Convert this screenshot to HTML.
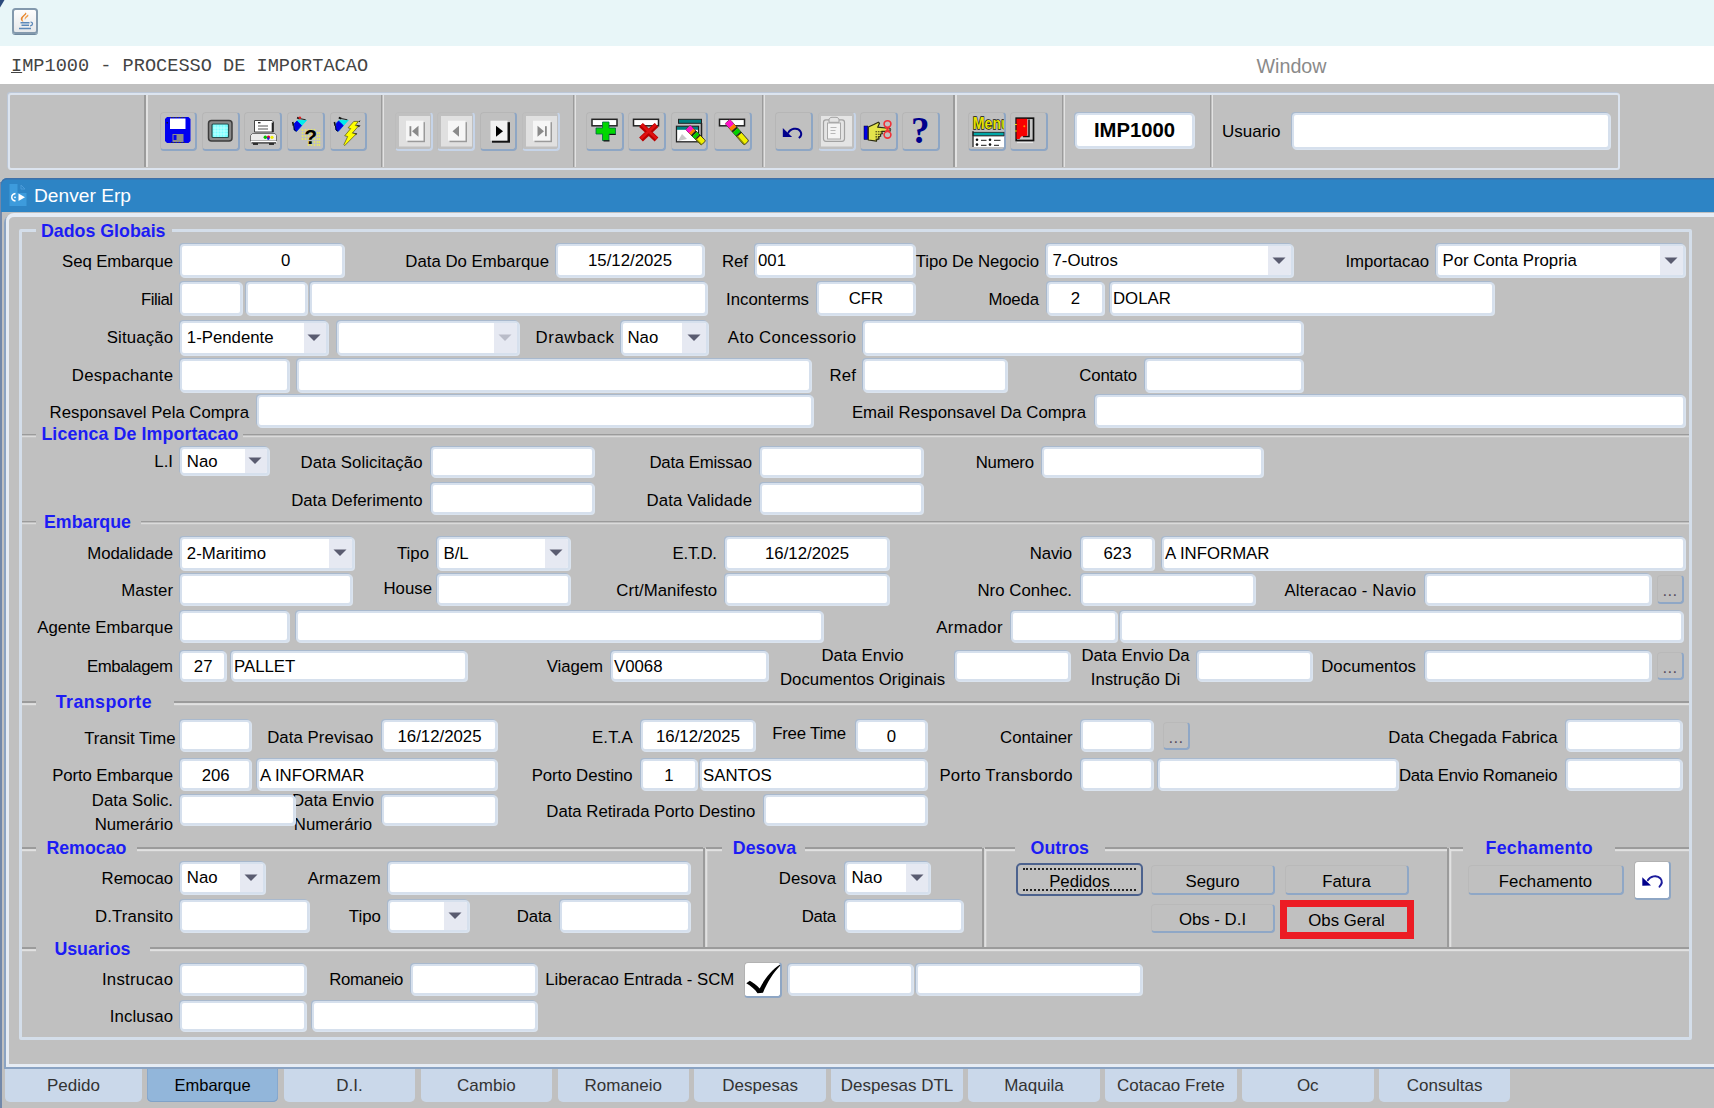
<!DOCTYPE html>
<html lang="pt-BR">
<head>
<meta charset="utf-8">
<title>IMP1000 - PROCESSO DE IMPORTACAO</title>
<style>
*{box-sizing:content-box;margin:0;padding:0}
html,body{width:1714px;height:1108px;overflow:hidden;background:#c0c0c0}
body{position:relative;font-family:"Liberation Sans",sans-serif;font-size:16.8px;color:#000}
#top{position:absolute;left:0;top:0;width:1714px;height:46px;background:#e8f6f8}
#menu{position:absolute;left:0;top:46px;width:1714px;height:38px;background:#fff}
#menu .m1{position:absolute;left:11px;top:10px;font-family:"Liberation Mono",monospace;font-size:18.6px;color:#444;letter-spacing:0px}
#menu .m2{position:absolute;left:1256.500px;top:8.500px;font-size:19.700px;color:#8a8a8a}
#tb{position:absolute;left:8px;top:93px;width:1608px;height:73px;border:2px solid #dce4ef;border-radius:3px;box-shadow:-1px -1px 0 0 #bcc7d7}
.sep{position:absolute;top:95px;height:72px;width:1.500px;background:#9b9b9b;box-shadow:2px 0 0 0 #e2e2e2}
.tbb{position:absolute;top:111.700px;width:34.500px;height:36px;border-radius:4px;border:solid;border-width:1px 2px 2px 1px;border-color:#b6b6b6 #8ea6c4 #8ea6c4 #b6b6b6}
.tbb.dis{border-color:#bcbcbc #c6d4e8 #c6d4e8 #bcbcbc}
#jv{position:absolute;left:12px;top:7.500px;width:22px;height:22px;border:2px solid #8399ad;border-radius:3.500px;background:linear-gradient(#fdfdfd,#e6e8ea);box-shadow:0 1px 0 0 #6f889e}
#jv svg{position:absolute;left:0;top:0}
#ttl{position:absolute;left:1px;top:178px;width:1713px;height:34.300px;background:#2d84c5;border-top-left-radius:6px;box-shadow:inset 0 1.500px 0 0 #3f70a8}
#ttl span{position:absolute;left:33px;top:7.300px;font-size:19.2px;color:#fff}
#wl{position:absolute;left:0;top:182px;width:1.8px;height:926px;background:#7288aa}
#wl2{display:none}
#canvas{position:absolute;left:6px;top:212.700px;width:1720px;height:847px;border:3px solid #e6ecf4;border-top-width:4.300px;border-top-left-radius:8px;box-shadow:-2px 2px 0 0 #8aa3c3}
#frame{position:absolute;left:19.300px;top:229.300px;width:1666.500px;height:804.500px;border:3px solid #d4deea;border-radius:2px}
.l{position:absolute;white-space:nowrap;line-height:19px;color:#000}
.t{position:absolute;white-space:nowrap;line-height:20px;font-weight:bold;font-size:17.8px;color:#1c1cf4}
.f{position:absolute;background:#fff;border:2px solid #d6e0ed;border-radius:4px;box-shadow:-1px -1px 0 0 #a9b9cd,1px 1px 0 0 #dbe4ef;white-space:nowrap;overflow:hidden}
.f.c .ct{position:absolute;left:4.500px;top:0}
.f.c .ca{position:absolute;right:0;top:0;background:#e6e9f2}
.hl{position:absolute;height:1.800px;margin-top:-0.500px;background:#9b9b9b;box-shadow:0 2.200px 0 0 #e1e1e1}
.vl{position:absolute;width:1.800px;margin-left:-0.200px;background:#9b9b9b;box-shadow:2.300px 0 0 0 #e1e1e1}
.b{position:absolute;text-align:center;border:solid;border-width:1px 2px 2px 1px;border-color:#b9b9b9 #8fa7c6 #8fa7c6 #b9b9b9;border-radius:4px;background:#c0c0c0;white-space:nowrap}
.b.sm{color:#585060;letter-spacing:0.300px}
.b.flat{border-color:transparent}
.b.foc{border:2px solid #4c628e;border-radius:5px;width:123px !important;height:29px !important;line-height:33px !important}
.b.foc:before{content:"";position:absolute;left:5px;right:5px;top:2.500px;bottom:3px;border-top:2px dotted #222;border-bottom:2px dotted #222}
.wb{position:absolute;background:#fff;border-radius:4px;border:solid;border-width:1px 2px 2px 1px;border-color:#b2b2b2 #8ea6c4 #8ea6c4 #b2b2b2}
.tab{position:absolute;top:1068.500px;height:33px;line-height:33px;text-align:center;background:#cad8ea;border-radius:0 0 5px 5px;color:#333;font-size:17px}
.tab.sel{background:#92b6da;color:#000;font-size:16.500px;box-shadow:inset 0 -1px 0 0 #7fa1c8,inset 1px 0 0 0 #86a8ce,inset -1px 0 0 0 #86a8ce}
</style>
</head>
<body>
<div id="top"><svg width="6" height="9" style="position:absolute;left:0;top:0"><path d="M0 0h4.500L0 7.500z" fill="#2b4a7c"/></svg></div>
<div id="menu"><span class="m1"><u>I</u>MP1000 - PROCESSO DE IMPORTACAO</span><span class="m2">Window</span></div>
<div id="tb"></div>
<div class="sep" style="left:144.3px"></div>
<div class="sep" style="left:380.5px"></div>
<div class="sep" style="left:572.8px"></div>
<div class="sep" style="left:761.8px"></div>
<div class="sep" style="left:953.4px"></div>
<div class="sep" style="left:1061.8px"></div>
<div class="sep" style="left:1209.8px"></div>
<div class="tbb" style="left:159.5px"></div>
<div class="tbb" style="left:202px"></div>
<div class="tbb" style="left:244px"></div>
<div class="tbb" style="left:287px"></div>
<div class="tbb" style="left:329.5px"></div>
<div class="tbb dis" style="left:395.3px"></div>
<div class="tbb dis" style="left:437.3px"></div>
<div class="tbb" style="left:479.8px"></div>
<div class="tbb dis" style="left:522.3px"></div>
<div class="tbb" style="left:586.3px"></div>
<div class="tbb" style="left:628.3px"></div>
<div class="tbb" style="left:670.7px"></div>
<div class="tbb" style="left:714.3px"></div>
<div class="tbb" style="left:775px"></div>
<div class="tbb dis" style="left:818px"></div>
<div class="tbb" style="left:860.3px"></div>
<div class="tbb" style="left:902.3px"></div>
<div class="tbb" style="left:968.3px"></div>
<div class="tbb" style="left:1010.3px"></div>
<div class="f" style="left:1075px;top:113px;width:115px;height:31px;line-height:31px;text-align:center;font-weight:bold;font-size:20.3px">IMP1000</div>
<div class="l" style="left:1222px;top:122px;font-size:17px">Usuario</div>
<div class="f" style="left:1292px;top:113px;width:314px;height:32px"></div>
<svg id="icons" width="1100" height="50" viewBox="0 106 1100 50" style="position:absolute;left:0;top:106px"><g><path d="M167 117h21.5l2 2v22l-2 2h-21.5l-2-2v-22z" fill="#0000f0"/><rect x="170" y="118.5" width="15.5" height="10.5" fill="#fff"/><rect x="172.5" y="134" width="11" height="8" fill="#8c8c8c"/><rect x="173.5" y="135" width="3" height="5" fill="#0000f0"/><path d="M171 117.5h14M171 142.5h14" stroke="#333" stroke-width="1" stroke-dasharray="1.5 1.5"/><rect x="166.5" y="122" width="1.5" height="1.5" fill="#113"/></g><g><rect x="208.5" y="120.5" width="23.5" height="20.5" rx="3" fill="#8a8a8a" stroke="#3c3c3c" stroke-width="1.5"/><rect x="212" y="124" width="16.5" height="13.5" rx="1" fill="#7ff" stroke="#2a4a4a" stroke-width="1.2"/><path d="M215 125v12M218 125v12M221 125v12M224 125v12M213 128h15M213 131h15M213 134h15" stroke="#c8ffff" stroke-width="0.8"/></g><g><path d="M254.5 120.5h17.5l1.5 1.5v10h-19z" fill="#fff" stroke="#444" stroke-width="1"/><path d="M272.5 122.5v9.5" stroke="#222" stroke-width="1.6"/><rect x="258" y="122" width="2.5" height="1.4" fill="#333"/><path d="M258 126h10M258 129h10" stroke="#555" stroke-width="1.2"/><path d="M252.5 133.500h22.5l1.500 2v5.500h-26v-5.500z" fill="#ececec" stroke="#555" stroke-width="0.8"/><rect x="251" y="141" width="25.500" height="1.800" fill="#fff"/><rect x="251.500" y="142.300" width="24.500" height="1.200" fill="#222"/><rect x="253" y="143.300" width="5" height="1.500" fill="#111"/><rect x="269" y="143.300" width="5" height="1.500" fill="#111"/><circle cx="265.300" cy="137.300" r="1.700" fill="#00c000"/><circle cx="268.500" cy="137" r="1.600" fill="#e00030"/><circle cx="268.300" cy="138.600" r="1.300" fill="#2020e0"/><circle cx="272" cy="137.300" r="1.600" fill="#ecec00"/></g><g transform="translate(-41.7 0)"><path d="M336.100 123.600L339.400 120.200L348.300 120.300L338.300 131.200L336 129.900Z" fill="#00ecec" stroke="#00ecec" stroke-width="0.800" stroke-linejoin="round"/><path d="M336.100 123.600L338.600 121L343.300 125.600L338.300 131.200L336 129.900Z" fill="#0000e4" stroke="#0000e4" stroke-width="0.800" stroke-linejoin="round"/><path d="M338.800 117.600l2.500 1" stroke="#111" stroke-width="1.700" fill="none"/><path d="M341 118.500l6.300 1.200" stroke="#222" stroke-width="1.100" fill="none"/><path d="M334.400 122l0.800 3.800" stroke="#111" stroke-width="1.600" fill="none"/><path d="M335.500 126l0.500 4 2 1.300" stroke="#002" stroke-width="1" fill="none"/></g><circle cx="299.800" cy="117.800" r="1.400" fill="#e02020"/><g fill="#e8e860"><circle cx="302.5" cy="130" r="0.9"/><circle cx="302.5" cy="133" r="0.9"/><circle cx="302.5" cy="136" r="0.9"/><circle cx="302.5" cy="139" r="0.9"/><circle cx="305.5" cy="130" r="0.9"/><circle cx="305.5" cy="133" r="0.9"/><circle cx="305.5" cy="136" r="0.9"/><circle cx="305.5" cy="139" r="0.9"/><circle cx="308.5" cy="130" r="0.9"/><circle cx="308.5" cy="133" r="0.9"/><circle cx="308.5" cy="136" r="0.9"/><circle cx="308.5" cy="139" r="0.9"/><circle cx="308.5" cy="142" r="0.9"/><circle cx="308.5" cy="145" r="0.9"/><circle cx="311.5" cy="130" r="0.9"/><circle cx="311.5" cy="133" r="0.9"/><circle cx="311.5" cy="136" r="0.9"/><circle cx="311.5" cy="139" r="0.9"/><circle cx="311.5" cy="142" r="0.9"/><circle cx="311.5" cy="145" r="0.9"/><circle cx="314.5" cy="130" r="0.9"/><circle cx="314.5" cy="133" r="0.9"/><circle cx="314.5" cy="136" r="0.9"/><circle cx="314.5" cy="139" r="0.9"/><circle cx="314.5" cy="142" r="0.9"/><circle cx="314.5" cy="145" r="0.9"/><circle cx="317.5" cy="133" r="0.9"/><circle cx="317.5" cy="136" r="0.9"/><circle cx="317.5" cy="139" r="0.9"/><circle cx="317.5" cy="142" r="0.9"/><circle cx="317.5" cy="145" r="0.9"/><circle cx="319.5" cy="133" r="0.9"/><circle cx="319.5" cy="136" r="0.9"/><circle cx="319.5" cy="139" r="0.9"/><circle cx="319.5" cy="142" r="0.9"/><circle cx="319.5" cy="145" r="0.9"/></g><text x="304.300" y="144" font-family="Liberation Sans,sans-serif" font-weight="bold" font-size="21" fill="#000">?</text><g transform="translate(0 0)"><path d="M336.100 123.600L339.400 120.200L348.300 120.300L338.300 131.200L336 129.900Z" fill="#00ecec" stroke="#00ecec" stroke-width="0.800" stroke-linejoin="round"/><path d="M336.100 123.600L338.600 121L343.300 125.600L338.300 131.200L336 129.900Z" fill="#0000e4" stroke="#0000e4" stroke-width="0.800" stroke-linejoin="round"/><path d="M338.800 117.600l2.500 1" stroke="#111" stroke-width="1.700" fill="none"/><path d="M341 118.500l6.300 1.200" stroke="#222" stroke-width="1.100" fill="none"/><path d="M334.400 122l0.800 3.800" stroke="#111" stroke-width="1.600" fill="none"/><path d="M335.500 126l0.500 4 2 1.300" stroke="#002" stroke-width="1" fill="none"/></g><path d="M355.300 124.800l5.300 0.700-1.800 1.800zM352.300 132.500l5 1-1.500 1.800zM358.300 121.400l2.200-1.200-1 2z" fill="#111"/><path d="M353.800 121.400L358.300 121.400L355.300 125.500L358.300 126.300L352.300 133.100L356.100 134.100L344.700 145.600L343.900 144.500L347.700 136.500L344.700 135.800L350.700 128.600L348.100 127.800Z" fill="#ff0" stroke="#55550a" stroke-width="0.700" stroke-linejoin="round"/><rect x="399.0" y="116" width="31" height="30.500" fill="#e0e0e0"/><rect x="407.5" y="122.2" width="17.500" height="20" fill="#9a9a9a"/><rect x="406.0" y="120.7" width="17.500" height="20" fill="#f6f6f6"/><rect x="409.5" y="126.19999999999999" width="1.800" height="10" fill="#8a8a8a"/><path d="M418.5 125.69999999999999v11l-6.500-5.500z" fill="#8a8a8a"/><rect x="441.0" y="116" width="31" height="30.500" fill="#e0e0e0"/><rect x="449.5" y="122.2" width="17.500" height="20" fill="#9a9a9a"/><rect x="448.0" y="120.7" width="17.500" height="20" fill="#f6f6f6"/><path d="M459.0 125.69999999999999v11l-6.500-5.500z" fill="#8a8a8a"/><rect x="492.0" y="122.2" width="18" height="20.500" fill="#111"/><rect x="490.5" y="120.7" width="17" height="20" fill="#f2f2f2"/><path d="M496.0 125.69999999999999v11l7-5.500z" fill="#000"/><rect x="526.0" y="116" width="31" height="30.500" fill="#e0e0e0"/><rect x="534.5" y="122.2" width="17.500" height="20" fill="#9a9a9a"/><rect x="533.0" y="120.7" width="17.500" height="20" fill="#f6f6f6"/><rect x="545.0" y="126.19999999999999" width="1.800" height="10" fill="#8a8a8a"/><path d="M537.5 125.69999999999999v11l6.500-5.500z" fill="#8a8a8a"/><rect x="592" y="119.300" width="25" height="6.500" fill="#fff" stroke="#222" stroke-width="1.500"/><path d="M602.500 122h6.500v6h6.500v6h-6.500v6.500h-6.500v-6.500h-6.500v-6h6.500z" fill="#00d800" stroke="#064" stroke-width="0.800"/><path d="M603.500 140.800h6M609.300 134.500h6.500" stroke="#111" stroke-width="1.200"/><rect x="633.5" y="119.300" width="25" height="6.500" fill="#fff" stroke="#222" stroke-width="1.500"/><path d="M641 125l15.500 14.500M656.500 125l-15.500 14.500" stroke="#b80000" stroke-width="5.500" stroke-linecap="butt"/><path d="M641.500 124.500l15 14M656 124.500l-15 14" stroke="#e01010" stroke-width="2.500"/><rect x="678.500" y="119.300" width="23" height="4" fill="#008080" stroke="#222" stroke-width="1"/><path d="M701.500 123v18h-9" stroke="#222" stroke-width="1.500" fill="none"/><rect x="676.500" y="126.300" width="22" height="15.500" fill="#fff" stroke="#222" stroke-width="1.300"/><rect x="677" y="126.800" width="21" height="3" fill="#008080"/><path d="M678 141l4-7 5 5z" fill="#c8c8c8"/><g transform="translate(688 127.5) rotate(45.0)"><rect x="0" y="-3.200" width="21.920310216782973" height="6.400" rx="1.500" fill="#f0f000" stroke="#222" stroke-width="0.800"/><rect x="0" y="-3.200" width="4.8" height="6.400" fill="#ff10c8"/><rect x="4.8" y="-3.200" width="2.6" height="6.400" fill="#ff7a00"/><rect x="7.5" y="-3.200" width="2" height="6.400" fill="#222"/><rect x="9.5" y="-3.200" width="3.5" height="6.400" fill="#00d000"/><rect x="13.0" y="-3.200" width="1.500" height="6.400" fill="#222"/><path d="M13.2 2.500h8.3" stroke="#8a8a00" stroke-width="1.300"/></g><rect x="719.5" y="119.300" width="25" height="6.500" fill="#fff" stroke="#222" stroke-width="1.500"/><g transform="translate(727.5 121.5) rotate(48.5)"><rect x="0" y="-3.200" width="28.692333470807146" height="6.400" rx="1.500" fill="#f0f000" stroke="#222" stroke-width="0.800"/><rect x="0" y="-3.200" width="6.3" height="6.400" fill="#ff10c8"/><rect x="6.3" y="-3.200" width="3.4" height="6.400" fill="#ff7a00"/><rect x="9.8" y="-3.200" width="2" height="6.400" fill="#222"/><rect x="11.8" y="-3.200" width="4.6" height="6.400" fill="#00d000"/><rect x="16.3" y="-3.200" width="1.500" height="6.400" fill="#222"/><path d="M17.2 2.500h10.9" stroke="#8a8a00" stroke-width="1.300"/></g><path d="M782.800 128v9h9.300z" fill="#00008c"/><path d="M788 133.500c2-5 9.500-6.800 12.500-2 1.300 2.300 0.500 5-1.700 6.500" fill="none" stroke="#00008c" stroke-width="2"/><rect x="821" y="116" width="31" height="30.500" fill="#e4e4e4"/><rect x="823.500" y="119.800" width="21" height="21.500" rx="2.500" fill="none" stroke="#a2a2a2" stroke-width="1.200"/><rect x="827.500" y="123" width="13" height="16" fill="#f4f4f4" stroke="#a8a8a8" stroke-width="1"/><path d="M829 119.800c0-1.500 1.500-2.500 3-2.500h4c1.500 0 3 1 3 2.500v2.500h-10z" fill="#e4e4e4" stroke="#a2a2a2" stroke-width="1"/><path d="M830.500 127.500h6M830.500 130.500h5M830.500 133.500h5" stroke="#b8b8b8" stroke-width="1.200"/><rect x="864" y="126" width="3.800" height="13.500" fill="#0000e8" stroke="#002" stroke-width="0.500"/><path d="M868.300 127l5.500-2.500 4.500-2.300 1.200 1-1.800 4 12.500 1.300v2.600l-8.500 0.300 0.600 2.200-2 0.600 0.400 2-2 0.600 0.300 2-2.200 0.600-0.300 1.800-8.200-1.200z" fill="#e4e44c" stroke="#2a2a10" stroke-width="1.200" stroke-linejoin="round"/><path d="M875.500 131.700h6M875.500 134.300h5M875.500 136.900h4.500M875.500 139.300h3" stroke="#3a3a10" stroke-width="1.100" stroke-dasharray="1.600 0.800"/><ellipse cx="887.500" cy="124" rx="3.400" ry="3.300" fill="none" stroke="#f03038" stroke-width="1.600"/><ellipse cx="887.500" cy="134.800" rx="3.400" ry="3.300" fill="none" stroke="#f03038" stroke-width="1.600"/><path d="M885.500 127.300l4 4.500M889.500 127.300l-4 4.500" stroke="#f03038" stroke-width="1.400"/><path d="M889.500 128l2 1.500-2 1.500z" fill="#555"/><text x="911" y="142.500" font-family="Liberation Serif,serif" font-weight="bold" font-size="37" fill="#00008c">?</text><clipPath id="mc"><rect x="970" y="112" width="33.800" height="22"/></clipPath><text clip-path="url(#mc)" x="972.800" y="128.800" font-family="Liberation Sans,sans-serif" font-weight="bold" font-size="17" fill="#e4e400" stroke="#111" stroke-width="1.300" paint-order="stroke" textLength="37" lengthAdjust="spacingAndGlyphs">Menu</text><rect x="973" y="132.300" width="31" height="3.400" fill="#00a8a8" stroke="#222" stroke-width="0.800"/><rect x="973.500" y="137" width="30.500" height="10" fill="#fff"/><path d="M973 131v16" stroke="#222" stroke-width="1.200"/><g fill="#111"><circle cx="977" cy="139.700" r="1.300"/><circle cx="977" cy="144.600" r="1.300"/><circle cx="990" cy="139.700" r="1.300"/><circle cx="990" cy="144.600" r="1.300"/></g><path d="M981 140.300h5.500M994 140.300h6.500M981 145.300h5.500M994 145.300h5" stroke="#444" stroke-width="1.200"/><rect x="1016.200" y="118.200" width="17.300" height="22.300" fill="#c8c8c8" stroke="#111" stroke-width="1.700"/><path d="M1029 119.500v17h-6" stroke="#111" stroke-width="1.500" fill="none"/><path d="M1016.500 118.800h10.800v17l-6.200 0.800-1.600 2.400h-3z" fill="#f80000"/><circle cx="1024.300" cy="126.200" r="1" fill="#ff9000"/><path d="M1015 124.500h1.800M1015 131h1.800" stroke="#e8e800" stroke-width="1.200"/><path d="M1017 142.500h16" stroke="#e8e8e8" stroke-width="1.200"/></svg>
<div id="jv"><svg width="22" height="22" viewBox="0 0 22 22"><path d="M11.500 2.500c2.500 1-1 3-2.500 5-1 1.500-0.500 3 0.500 4.500-2.500-1-3.500-3-2-5 1.500-2 4-3 4-4.500z" fill="#e8852a"/><path d="M14 4.500c-2 1.500-4 3-3 5.500 0-1.500 2-2.500 3-3.500 0.500-0.500 0.500-1.500 0-2z" fill="#f0a050"/><path d="M6.500 12.800h9M7.500 15.300h7.500M5 18.500h12" stroke="#5b88b8" stroke-width="1.400"/><path d="M16.500 12c2.800 0.300 2.800 3.300-0.500 4" stroke="#5b88b8" stroke-width="1.200" fill="none"/></svg></div>
<div id="wl"></div><div id="wl2"></div>
<div id="ttl"><svg width="20" height="24" viewBox="0 0 20 24" style="position:absolute;left:8px;top:5px"><path d="M0.500 1h8v9h9v13h-17z" fill="#3d9bdc"/><path d="M12 2l4 4h-4z" fill="none" stroke="#4a9ad8" stroke-width="1"/><path d="M9.500 10.500l6.500 3.800-6.500 3.800z" fill="#fff"/><path d="M6.500 10.500c-5 1-5 6.500 0 7.500" stroke="#fff" stroke-width="1.500" fill="none"/><circle cx="6" cy="14.300" r="0.900" fill="#fff"/></svg><span>Denver Erp</span></div>
<div id="canvas"></div>
<div id="frame"></div>
<div class="t" style="left:36px;top:220.5px;padding:0 6px 0 5px;background:#c0c0c0">Dados Globais</div>
<div class="l" style="right:1541px;top:251.7px;letter-spacing:-0.09px;margin-right:0.09px;">Seq Embarque</div>
<div class="f " style="left:180.3px;top:244px;width:159.7px;height:29px;line-height:30.40px;text-align:center;text-indent:47px;">0</div>
<div class="l" style="right:1165px;top:251.7px;">Data Do Embarque</div>
<div class="f " style="left:556px;top:244px;width:144px;height:29px;line-height:30.40px;text-align:center;">15/12/2025</div>
<div class="l" style="right:966px;top:251.7px;">Ref</div>
<div class="f " style="left:755px;top:244px;width:156px;height:29px;line-height:30.40px;padding-left:1px;width:155px;">001</div>
<div class="l" style="right:675px;top:251.7px;letter-spacing:-0.08px;margin-right:0.08px;">Tipo De Negocio</div>
<div class="f c" style="left:1046px;top:244px;width:243px;height:29px;line-height:30.40px;"><span class="ct">7-Outros</span><span class="ca" style="width:23px;height:29px"><svg width="14" height="8" viewBox="0 0 14 8" style="position:absolute;left:4.0px;top:10.5px"><path d="M0.500 0.500h13l-6.500 6.500z" fill="#5a5c70"/></svg></span></div>
<div class="l" style="right:285px;top:251.7px;letter-spacing:-0.05px;margin-right:0.05px;">Importacao</div>
<div class="f c" style="left:1436px;top:244px;width:245px;height:29px;line-height:30.40px;"><span class="ct">Por Conta Propria</span><span class="ca" style="width:23px;height:29px"><svg width="14" height="8" viewBox="0 0 14 8" style="position:absolute;left:4.0px;top:10.5px"><path d="M0.500 0.500h13l-6.500 6.500z" fill="#5a5c70"/></svg></span></div>
<div class="l" style="right:1541px;top:289.90000000000003px;letter-spacing:-0.50px;margin-right:0.50px;">Filial</div>
<div class="f " style="left:180.3px;top:282px;width:57.69999999999999px;height:29px;line-height:30.80px;padding-left:1px;width:56.69999999999999px;"></div>
<div class="f " style="left:246px;top:282px;width:57px;height:29px;line-height:30.80px;padding-left:1px;width:56px;"></div>
<div class="f " style="left:310px;top:282px;width:393px;height:29px;line-height:30.80px;padding-left:1px;width:392px;"></div>
<div class="l" style="right:905px;top:289.90000000000003px;letter-spacing:-0.01px;margin-right:0.01px;">Inconterms</div>
<div class="f " style="left:817px;top:282px;width:94px;height:29px;line-height:30.80px;text-align:center;">CFR</div>
<div class="l" style="right:675px;top:289.90000000000003px;letter-spacing:-0.17px;margin-right:0.17px;">Moeda</div>
<div class="f " style="left:1047px;top:282px;width:53px;height:29px;line-height:30.80px;text-align:center;">2</div>
<div class="f " style="left:1110px;top:282px;width:380px;height:29px;line-height:30.80px;padding-left:1px;width:379px;">DOLAR</div>
<div class="l" style="right:1541px;top:328.2px;letter-spacing:0.13px;margin-right:-0.13px;">Situação</div>
<div class="f c" style="left:180.3px;top:321px;width:143.7px;height:29.5px;line-height:29.40px;"><span class="ct">1-Pendente</span><span class="ca" style="width:22px;height:29.5px"><svg width="14" height="8" viewBox="0 0 14 8" style="position:absolute;left:3.5px;top:10.75px"><path d="M0.500 0.500h13l-6.500 6.500z" fill="#5a5c70"/></svg></span></div>
<div class="f c" style="left:337px;top:321px;width:178px;height:29.5px;line-height:29.40px;"><span class="ct"></span><span class="ca" style="width:23px;height:29.5px"><svg width="14" height="8" viewBox="0 0 14 8" style="position:absolute;left:4.0px;top:10.75px"><path d="M0.500 0.500h13l-6.500 6.500z" fill="#b9bcc8"/></svg></span></div>
<div class="l" style="right:1100px;top:328.2px;letter-spacing:0.54px;margin-right:-0.54px;">Drawback</div>
<div class="f c" style="left:621px;top:321px;width:83px;height:29.5px;line-height:29.40px;"><span class="ct">Nao</span><span class="ca" style="width:24px;height:29.5px"><svg width="14" height="8" viewBox="0 0 14 8" style="position:absolute;left:4.5px;top:10.75px"><path d="M0.500 0.500h13l-6.500 6.500z" fill="#5a5c70"/></svg></span></div>
<div class="l" style="right:858px;top:328.2px;letter-spacing:0.36px;margin-right:-0.36px;">Ato Concessorio</div>
<div class="f " style="left:863px;top:321px;width:436px;height:29.5px;line-height:29.40px;padding-left:1px;width:435px;"></div>
<div class="l" style="right:1541px;top:366.40000000000003px;letter-spacing:0.23px;margin-right:-0.23px;">Despachante</div>
<div class="f " style="left:180.3px;top:358.5px;width:104.69999999999999px;height:29.5px;line-height:30.80px;padding-left:1px;width:103.69999999999999px;"></div>
<div class="f " style="left:297px;top:358.5px;width:510px;height:29.5px;line-height:30.80px;padding-left:1px;width:509px;"></div>
<div class="l" style="right:858px;top:366.40000000000003px;letter-spacing:0.15px;margin-right:-0.15px;">Ref</div>
<div class="f " style="left:863px;top:358.5px;width:140px;height:29.5px;line-height:30.80px;padding-left:1px;width:139px;"></div>
<div class="l" style="right:577px;top:366.40000000000003px;letter-spacing:-0.19px;margin-right:0.19px;">Contato</div>
<div class="f " style="left:1145px;top:358.5px;width:154px;height:29.5px;line-height:30.80px;padding-left:1px;width:153px;"></div>
<div class="l" style="right:1465px;top:402.8px;letter-spacing:-0.01px;margin-right:0.01px;">Responsavel Pela Compra</div>
<div class="f " style="left:257px;top:395px;width:552px;height:28px;line-height:30.60px;padding-left:1px;width:551px;"></div>
<div class="l" style="right:628px;top:402.8px;">Email Responsavel Da Compra</div>
<div class="f " style="left:1095px;top:395px;width:586px;height:28px;line-height:30.60px;padding-left:1px;width:585px;"></div>
<div class="hl" style="left:22px;top:434px;width:14px"></div>
<div class="hl" style="left:243px;top:434px;width:1446px"></div>
<div class="t" style="left:41.4px;top:424px;letter-spacing:0.12px">Licenca De Importacao</div>
<div class="l" style="right:1541px;top:452.25px;">L.I</div>
<div class="f c" style="left:180.3px;top:447px;width:84.69999999999999px;height:24px;line-height:26.50px;"><span class="ct">Nao</span><span class="ca" style="width:22px;height:24px"><svg width="14" height="8" viewBox="0 0 14 8" style="position:absolute;left:3.5px;top:8.0px"><path d="M0.500 0.500h13l-6.500 6.500z" fill="#5a5c70"/></svg></span></div>
<div class="l" style="right:1291.5px;top:453.2px;letter-spacing:0.05px;margin-right:-0.05px;">Data Solicitação</div>
<div class="f " style="left:431px;top:447px;width:159px;height:26px;line-height:27.40px;padding-left:1px;width:158px;"></div>
<div class="l" style="right:962px;top:453.2px;letter-spacing:-0.17px;margin-right:0.17px;">Data Emissao</div>
<div class="f " style="left:760px;top:447px;width:159px;height:26px;line-height:27.40px;padding-left:1px;width:158px;"></div>
<div class="l" style="right:680px;top:453.2px;letter-spacing:-0.29px;margin-right:0.29px;">Numero</div>
<div class="f " style="left:1042px;top:447px;width:217px;height:26px;line-height:27.40px;padding-left:1px;width:216px;"></div>
<div class="l" style="right:1291.5px;top:490.6px;letter-spacing:-0.01px;margin-right:0.01px;">Data Deferimento</div>
<div class="f " style="left:431px;top:483px;width:159px;height:27px;line-height:30.20px;padding-left:1px;width:158px;"></div>
<div class="l" style="right:962px;top:490.6px;letter-spacing:0.11px;margin-right:-0.11px;">Data Validade</div>
<div class="f " style="left:760px;top:483px;width:159px;height:27px;line-height:30.20px;padding-left:1px;width:158px;"></div>
<div class="hl" style="left:22px;top:521px;width:14px"></div>
<div class="hl" style="left:141px;top:521px;width:1548px"></div>
<div class="t" style="left:44px;top:511.70000000000005px">Embarque</div>
<div class="l" style="right:1541px;top:544.3px;letter-spacing:-0.12px;margin-right:0.12px;">Modalidade</div>
<div class="f c" style="left:180.3px;top:537px;width:169.7px;height:28.5px;line-height:29.60px;"><span class="ct">2-Maritimo</span><span class="ca" style="width:23px;height:28.5px"><svg width="14" height="8" viewBox="0 0 14 8" style="position:absolute;left:4.0px;top:10.25px"><path d="M0.500 0.500h13l-6.500 6.500z" fill="#5a5c70"/></svg></span></div>
<div class="l" style="right:1285px;top:544.3px;">Tipo</div>
<div class="f c" style="left:437px;top:537px;width:129px;height:28.5px;line-height:29.60px;"><span class="ct">B/L</span><span class="ca" style="width:23px;height:28.5px"><svg width="14" height="8" viewBox="0 0 14 8" style="position:absolute;left:4.0px;top:10.25px"><path d="M0.500 0.500h13l-6.500 6.500z" fill="#5a5c70"/></svg></span></div>
<div class="l" style="right:997px;top:544.3px;letter-spacing:-0.26px;margin-right:0.26px;">E.T.D.</div>
<div class="f " style="left:725px;top:537px;width:160px;height:28.5px;line-height:29.60px;text-align:center;">16/12/2025</div>
<div class="l" style="right:642px;top:544.3px;letter-spacing:-0.19px;margin-right:0.19px;">Navio</div>
<div class="f " style="left:1081px;top:537px;width:69px;height:28.5px;line-height:29.60px;text-align:center;">623</div>
<div class="f " style="left:1162px;top:537px;width:519px;height:28.5px;line-height:29.60px;padding-left:1px;width:518px;">A INFORMAR</div>
<div class="l" style="right:1541px;top:580.9px;letter-spacing:0.08px;margin-right:-0.08px;">Master</div>
<div class="f " style="left:180.3px;top:573.5px;width:167.7px;height:27.0px;line-height:29.80px;padding-left:1px;width:166.7px;"></div>
<div class="l" style="right:1282px;top:579.3px;">House</div>
<div class="f " style="left:437px;top:573.5px;width:129px;height:27.0px;line-height:29.80px;padding-left:1px;width:128px;"></div>
<div class="l" style="right:997px;top:580.9px;letter-spacing:0.07px;margin-right:-0.07px;">Crt/Manifesto</div>
<div class="f " style="left:725px;top:573.5px;width:160px;height:27.0px;line-height:29.80px;padding-left:1px;width:159px;"></div>
<div class="l" style="right:642px;top:580.9px;letter-spacing:0.03px;margin-right:-0.03px;">Nro Conhec.</div>
<div class="f " style="left:1081px;top:573.5px;width:170px;height:27.0px;line-height:29.80px;padding-left:1px;width:169px;"></div>
<div class="l" style="right:298px;top:580.9px;letter-spacing:0.18px;margin-right:-0.18px;">Alteracao - Navio</div>
<div class="f " style="left:1425px;top:573.5px;width:222px;height:27.0px;line-height:29.80px;padding-left:1px;width:221px;"></div>
<div class="b sm" style="left:1657px;top:575px;width:24px;height:26px;line-height:30px">...</div>
<div class="l" style="right:1541px;top:617.8px;letter-spacing:0.04px;margin-right:-0.04px;">Agente Embarque</div>
<div class="f " style="left:180.3px;top:611px;width:104.69999999999999px;height:26.5px;line-height:28.60px;padding-left:1px;width:103.69999999999999px;"></div>
<div class="f " style="left:296px;top:611px;width:523px;height:26.5px;line-height:28.60px;padding-left:1px;width:522px;"></div>
<div class="l" style="right:711.5px;top:617.8px;letter-spacing:0.30px;margin-right:-0.30px;">Armador</div>
<div class="f " style="left:1011px;top:611px;width:102px;height:26.5px;line-height:28.60px;padding-left:1px;width:101px;"></div>
<div class="f " style="left:1120px;top:611px;width:559px;height:26.5px;line-height:28.60px;padding-left:1px;width:558px;"></div>
<div class="l" style="right:1541px;top:657.0999999999999px;letter-spacing:-0.44px;margin-right:0.44px;">Embalagem</div>
<div class="f " style="left:180.3px;top:650.5px;width:41.69999999999999px;height:26.5px;line-height:28.20px;text-align:center;">27</div>
<div class="f " style="left:231px;top:650.5px;width:232px;height:26.5px;line-height:28.20px;padding-left:1px;width:231px;">PALLET</div>
<div class="l" style="right:1111px;top:657.0999999999999px;letter-spacing:-0.06px;margin-right:0.06px;">Viagem</div>
<div class="f " style="left:611px;top:650.5px;width:153px;height:26.5px;line-height:28.20px;padding-left:1px;width:152px;">V0068</div>
<div class="l" style="left:712.5px;width:300px;top:646.5px;text-align:center;line-height:24px;margin-top:-2.5px">Data Envio<br>Documentos Originais</div>
<div class="f " style="left:955px;top:650.5px;width:111px;height:26.5px;line-height:28.20px;padding-left:1px;width:110px;"></div>
<div class="l" style="left:985.5px;width:300px;top:646.5px;text-align:center;line-height:24px;margin-top:-2.5px">Data Envio Da<br>Instrução Di</div>
<div class="f " style="left:1197px;top:650.5px;width:111px;height:26.5px;line-height:28.20px;padding-left:1px;width:110px;"></div>
<div class="l" style="right:298px;top:657.0999999999999px;letter-spacing:0.07px;margin-right:-0.07px;">Documentos</div>
<div class="f " style="left:1425px;top:650.5px;width:222px;height:26.5px;line-height:28.20px;padding-left:1px;width:221px;"></div>
<div class="b sm" style="left:1657px;top:651.5px;width:24px;height:25.5px;line-height:29.5px">...</div>
<div class="hl" style="left:22px;top:701.5px;width:14px"></div>
<div class="hl" style="left:174px;top:701.5px;width:1515px"></div>
<div class="t" style="left:55.7px;top:691.5px;letter-spacing:0.45px">Transporte</div>
<div class="l" style="right:1538.4px;top:728.5999999999999px;letter-spacing:-0.02px;margin-right:0.02px;">Transit Time</div>
<div class="f " style="left:180.3px;top:720px;width:66.69999999999999px;height:26.5px;line-height:30.20px;padding-left:1px;width:65.69999999999999px;"></div>
<div class="l" style="right:1340.7px;top:727.5999999999999px;letter-spacing:0.06px;margin-right:-0.06px;">Data Previsao</div>
<div class="f " style="left:382px;top:720px;width:111px;height:26.5px;line-height:30.20px;text-align:center;">16/12/2025</div>
<div class="l" style="right:1081.3px;top:727.5999999999999px;letter-spacing:0.15px;margin-right:-0.15px;">E.T.A</div>
<div class="f " style="left:641px;top:720px;width:110px;height:26.5px;line-height:30.20px;text-align:center;">16/12/2025</div>
<div class="l" style="right:868px;top:723.9999999999999px;letter-spacing:-0.22px;margin-right:0.22px;">Free Time</div>
<div class="f " style="left:856px;top:720px;width:67px;height:26.5px;line-height:30.20px;text-align:center;">0</div>
<div class="l" style="right:641.3px;top:727.5999999999999px;letter-spacing:-0.02px;margin-right:0.02px;">Container</div>
<div class="f " style="left:1081px;top:720px;width:68px;height:26.5px;line-height:30.20px;padding-left:1px;width:67px;"></div>
<div class="b sm" style="left:1163px;top:721.5px;width:24px;height:25.0px;line-height:29.0px">...</div>
<div class="l" style="right:156.5px;top:727.5999999999999px;letter-spacing:0.02px;margin-right:-0.02px;">Data Chegada Fabrica</div>
<div class="f " style="left:1566px;top:720px;width:112px;height:26.5px;line-height:30.20px;padding-left:1px;width:111px;"></div>
<div class="l" style="right:1541px;top:765.5px;letter-spacing:-0.11px;margin-right:0.11px;">Porto Embarque</div>
<div class="f " style="left:180.3px;top:758.5px;width:66.69999999999999px;height:27.0px;line-height:29.00px;text-align:center;">206</div>
<div class="f " style="left:257px;top:758.5px;width:236px;height:27.0px;line-height:29.00px;padding-left:1px;width:235px;">A INFORMAR</div>
<div class="l" style="right:1081.3px;top:765.5px;letter-spacing:-0.05px;margin-right:0.05px;">Porto Destino</div>
<div class="f " style="left:641px;top:758.5px;width:52px;height:27.0px;line-height:29.00px;text-align:center;">1</div>
<div class="f " style="left:700px;top:758.5px;width:223px;height:27.0px;line-height:29.00px;padding-left:1px;width:222px;">SANTOS</div>
<div class="l" style="right:641.3px;top:765.5px;letter-spacing:0.24px;margin-right:-0.24px;">Porto Transbordo</div>
<div class="f " style="left:1081px;top:758.5px;width:68px;height:27.0px;line-height:29.00px;padding-left:1px;width:67px;"></div>
<div class="f " style="left:1158px;top:758.5px;width:236px;height:27.0px;line-height:29.00px;padding-left:1px;width:235px;"></div>
<div class="l" style="right:156.5px;top:765.5px;letter-spacing:-0.26px;margin-right:0.26px;">Data Envio Romaneio</div>
<div class="f " style="left:1566px;top:758.5px;width:112px;height:27.0px;line-height:29.00px;padding-left:1px;width:111px;"></div>
<div class="l" style="left:183px;width:300px;top:791.5px;text-align:center;line-height:24px;margin-top:-2.5px">Data Envio<br>Numerário</div>
<div class="l" style="right:1541px;top:791.5px;text-align:right;line-height:24px;margin-top:-2.5px">Data Solic.<br>Numerário</div>
<div class="f " style="left:180.3px;top:795px;width:110.69999999999999px;height:26px;line-height:28.60px;padding-left:1px;width:109.69999999999999px;"></div>
<div class="f " style="left:382px;top:795px;width:111px;height:26px;line-height:28.60px;padding-left:1px;width:110px;"></div>
<div class="l" style="right:958.6px;top:801.8px;letter-spacing:-0.03px;margin-right:0.03px;">Data Retirada Porto Destino</div>
<div class="f " style="left:764px;top:795px;width:159px;height:26px;line-height:28.60px;padding-left:1px;width:158px;"></div>
<div class="hl" style="left:22px;top:847.5px;width:14px"></div>
<div class="hl" style="left:136.7px;top:847.5px;width:566.3px"></div>
<div class="t" style="left:46.4px;top:837.5px">Remocao</div>
<div class="vl" style="left:703px;top:848px;height:100px"></div>
<div class="hl" style="left:706px;top:847.5px;width:16px"></div>
<div class="hl" style="left:805px;top:847.5px;width:177px"></div>
<div class="t" style="left:732.8px;top:837.5px">Desova</div>
<div class="vl" style="left:982px;top:848px;height:100px"></div>
<div class="hl" style="left:985px;top:847.5px;width:29.5px"></div>
<div class="hl" style="left:1104.5px;top:847.5px;width:342.5px"></div>
<div class="t" style="left:1030.6px;top:837.5px">Outros</div>
<div class="vl" style="left:1447px;top:848px;height:100px"></div>
<div class="hl" style="left:1450px;top:847.5px;width:13px"></div>
<div class="hl" style="left:1615px;top:847.5px;width:74px"></div>
<div class="t" style="left:1485.5px;top:837.5px;letter-spacing:0.27px">Fechamento</div>
<div class="l" style="right:1541px;top:868.9px;letter-spacing:-0.07px;margin-right:0.07px;">Remocao</div>
<div class="f c" style="left:180.3px;top:862px;width:80.69999999999999px;height:28px;line-height:28.80px;"><span class="ct">Nao</span><span class="ca" style="width:23px;height:28px"><svg width="14" height="8" viewBox="0 0 14 8" style="position:absolute;left:4.0px;top:10.0px"><path d="M0.500 0.500h13l-6.500 6.500z" fill="#5a5c70"/></svg></span></div>
<div class="l" style="right:1333.2px;top:868.9px;letter-spacing:0.23px;margin-right:-0.23px;">Armazem</div>
<div class="f " style="left:388px;top:862px;width:298px;height:28px;line-height:28.80px;padding-left:1px;width:297px;"></div>
<div class="l" style="right:878px;top:868.9px;letter-spacing:0.06px;margin-right:-0.06px;">Desova</div>
<div class="f c" style="left:845px;top:862px;width:81px;height:28px;line-height:28.80px;"><span class="ct">Nao</span><span class="ca" style="width:22px;height:28px"><svg width="14" height="8" viewBox="0 0 14 8" style="position:absolute;left:3.5px;top:10.0px"><path d="M0.500 0.500h13l-6.500 6.500z" fill="#5a5c70"/></svg></span></div>
<div class="l" style="right:1541px;top:906.8px;letter-spacing:0.13px;margin-right:-0.13px;">D.Transito</div>
<div class="f " style="left:180.3px;top:900px;width:124.69999999999999px;height:28px;line-height:28.60px;padding-left:1px;width:123.69999999999999px;"></div>
<div class="l" style="right:1333.2px;top:906.8px;letter-spacing:0.01px;margin-right:-0.01px;">Tipo</div>
<div class="f c" style="left:388px;top:900px;width:77px;height:28px;line-height:28.60px;"><span class="ct"></span><span class="ca" style="width:23px;height:28px"><svg width="14" height="8" viewBox="0 0 14 8" style="position:absolute;left:4.0px;top:10.0px"><path d="M0.500 0.500h13l-6.500 6.500z" fill="#5a5c70"/></svg></span></div>
<div class="l" style="right:1162.3px;top:906.8px;letter-spacing:-0.20px;margin-right:0.20px;">Data</div>
<div class="f " style="left:560px;top:900px;width:126px;height:28px;line-height:28.60px;padding-left:1px;width:125px;"></div>
<div class="l" style="right:878px;top:906.8px;letter-spacing:-0.37px;margin-right:0.37px;">Data</div>
<div class="f " style="left:845px;top:900px;width:114px;height:28px;line-height:28.60px;padding-left:1px;width:113px;"></div>
<div class="b foc" style="left:1016px;top:863px;width:124px;height:30px;line-height:34px">Pedidos</div>
<div class="b " style="left:1151px;top:865px;width:121px;height:27px;line-height:31px">Seguro</div>
<div class="b " style="left:1285px;top:865px;width:121px;height:27px;line-height:31px">Fatura</div>
<div class="b " style="left:1151px;top:904px;width:121px;height:26px;line-height:30px">Obs - D.I</div>
<div style="position:absolute;left:1280px;top:900px;width:120px;height:25px;border:7px solid #ec1c24;"></div>
<div class="b flat" style="left:1288px;top:908px;width:115px;height:20px;line-height:24px">Obs Geral</div>
<div class="b " style="left:1468px;top:865px;width:153px;height:27px;line-height:31px">Fechamento</div>
<div class="wb" style="left:1633.8px;top:860.8px;width:34.4px;height:36px"></div><svg width="30" height="20" viewBox="1638 870 30 20" style="position:absolute;left:1638px;top:870px"><path d="M1642.300 877.200V885.800L1651 885.400Z" fill="#00008c"/><path d="M1647.800 880.200C1650 876.300 1657 874.500 1660.500 878.500C1662.500 881 1662 884 1659.500 886.700" fill="none" stroke="#1c1c9c" stroke-width="1.900" stroke-linecap="round"/></svg>
<div class="hl" style="left:22px;top:947.7px;width:14px"></div>
<div class="hl" style="left:150px;top:947.7px;width:1539px"></div>
<div class="t" style="left:54.4px;top:939.3px">Usuarios</div>
<div class="l" style="right:1541px;top:970.0px;letter-spacing:0.26px;margin-right:-0.26px;">Instrucao</div>
<div class="f " style="left:180.3px;top:963.5px;width:121.69999999999999px;height:27.5px;line-height:28.00px;padding-left:1px;width:120.69999999999999px;"></div>
<div class="l" style="right:1310.6px;top:970.0px;letter-spacing:-0.32px;margin-right:0.32px;">Romaneio</div>
<div class="f " style="left:411px;top:963.5px;width:122px;height:27.5px;line-height:28.00px;padding-left:1px;width:121px;"></div>
<div class="l" style="right:979.7px;top:970.0px;letter-spacing:-0.01px;margin-right:0.01px;">Liberacao Entrada - SCM</div>
<div class="wb" style="left:744.4px;top:961.7px;width:34.700px;height:33px"></div><svg width="40" height="34" viewBox="744 962 40 34" style="position:absolute;left:744px;top:962px"><path d="M746.300 983.300L749.800 980.800C753 982.300 756.500 985.300 759.700 988.500C764.500 979 771.500 970 779.800 964.800L780.300 965.500C773 973 767 983 763 992.800L757.500 993.200C755 989.500 750.500 985.500 746.300 983.300Z" fill="#000"/></svg>
<div class="f " style="left:788px;top:963.5px;width:121px;height:27.5px;line-height:28.00px;padding-left:1px;width:120px;"></div>
<div class="f " style="left:916px;top:963.5px;width:222px;height:27.5px;line-height:28.00px;padding-left:1px;width:221px;"></div>
<div class="l" style="right:1541px;top:1007.1999999999999px;letter-spacing:0.10px;margin-right:-0.10px;">Inclusao</div>
<div class="f " style="left:180.3px;top:1000.5px;width:121.69999999999999px;height:26.200000000000045px;line-height:28.40px;padding-left:1px;width:120.69999999999999px;"></div>
<div class="f " style="left:312px;top:1000.5px;width:221px;height:26.200000000000045px;line-height:28.40px;padding-left:1px;width:220px;"></div>
<div class="tab" style="left:5.0px;width:136.8px">Pedido</div>
<div class="tab sel" style="left:146.8px;width:131.5px">Embarque</div>
<div class="tab" style="left:283.7px;width:131.5px">D.I.</div>
<div class="tab" style="left:420.6px;width:131.5px">Cambio</div>
<div class="tab" style="left:557.5px;width:131.5px">Romaneio</div>
<div class="tab" style="left:694.4px;width:131.5px">Despesas</div>
<div class="tab" style="left:831.3px;width:131.5px">Despesas DTL</div>
<div class="tab" style="left:968.2px;width:131.5px">Maquila</div>
<div class="tab" style="left:1105.1px;width:131.5px">Cotacao Frete</div>
<div class="tab" style="left:1242.0px;width:131.5px">Oc</div>
<div class="tab" style="left:1378.9px;width:131.5px">Consultas</div>
</body>
</html>
